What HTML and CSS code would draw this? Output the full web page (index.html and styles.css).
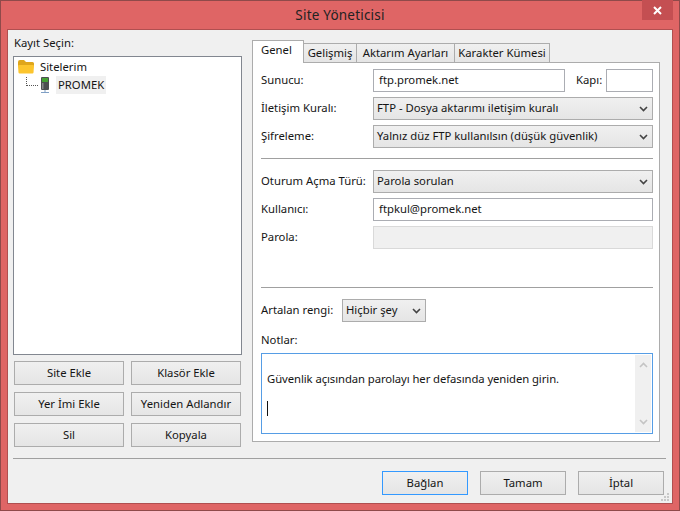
FILE: index.html
```html
<!DOCTYPE html>
<html lang="tr">
<head>
  <meta charset="UTF-8">
  <title>Site Yöneticisi</title>
  <link rel="stylesheet" href="styles.css">
</head>
<body>
  <div class="window">
    <div class="titlebar">
      <span class="title">Site Yöneticisi</span>
      <div class="close"><svg width="9" height="9" viewBox="0 0 9 9"><path d="M1 1L8 8M8 1L1 8" stroke="#fff" stroke-width="2"/></svg></div>
    </div>
    <div class="client">
      <div class="main">
        <div class="left">
          <div class="left-label">Kayıt Seçin:</div>
          <div class="tree">
            <div class="tree-row">
              <svg class="folder" width="16" height="14" viewBox="0 0 16 14">
                <path d="M0 2Q0 0 2 0H6L8 2H14.500Q16 2 16 3.500V6H0Z" fill="#dfa61c"/>
                <path d="M0 6Q0 5 1 5H15Q16 5 16 6L15.500 12.500Q15.400 13.500 14.500 13.500H1.500Q.6 13.500 .5 12.500Z" fill="#fcc52e"/>
              </svg>
              <span class="root-name">Sitelerim</span>
            </div>
            <div class="tree-row child">
              <span class="dots"></span>
              <svg class="server" width="12" height="17" viewBox="0 0 12 17">
                <rect x="2" y="0" width="8" height="13" rx="1" fill="#4c4f51"/>
                <rect x="3" y="1" width="6" height="4" fill="#45a135"/>
                <rect x="3" y="6" width="1.500" height="6" fill="#85888a"/>
                <path d="M6 13V15M2 15.500H10" stroke="#7f9fc4" stroke-width="1"/>
              </svg>
              <span class="selected">PROMEK</span>
            </div>
          </div>
          <div class="left-buttons">
            <div class="btn">Site Ekle</div>
            <div class="btn">Klasör Ekle</div>
            <div class="btn">Yer İmi Ekle</div>
            <div class="btn">Yeniden Adlandır</div>
            <div class="btn">Sil</div>
            <div class="btn">Kopyala</div>
          </div>
        </div>
        <div class="right">
          <div class="tabs">
            <div class="tab active">Genel</div>
            <div class="tab">Gelişmiş</div>
            <div class="tab">Aktarım Ayarları</div>
            <div class="tab">Karakter Kümesi</div>
          </div>
          <div class="panel">
            <div class="row">
              <label class="lbl">Sunucu:</label>
              <div class="input host">ftp.promek.net</div>
              <label class="port-lbl">Kapı:</label>
              <div class="input port"></div>
            </div>
            <div class="row">
              <label class="lbl">İletişim Kuralı:</label>
              <div class="select grow">FTP - Dosya aktarımı iletişim kuralı<svg class="chev" width="9" height="6" viewBox="0 0 9 6"><path d="M1 1L4.500 4.500L8 1" fill="none" stroke="#444" stroke-width="1.600"/></svg></div>
            </div>
            <div class="row">
              <label class="lbl">Şifreleme:</label>
              <div class="select grow">Yalnız düz FTP kullanılsın (düşük güvenlik)<svg class="chev" width="9" height="6" viewBox="0 0 9 6"><path d="M1 1L4.500 4.500L8 1" fill="none" stroke="#444" stroke-width="1.600"/></svg></div>
            </div>
            <div class="rule rule-a"></div>
            <div class="row">
              <label class="lbl">Oturum Açma Türü:</label>
              <div class="select grow">Parola sorulan<svg class="chev" width="9" height="6" viewBox="0 0 9 6"><path d="M1 1L4.500 4.500L8 1" fill="none" stroke="#444" stroke-width="1.600"/></svg></div>
            </div>
            <div class="row">
              <label class="lbl">Kullanıcı:</label>
              <div class="input grow">ftpkul@promek.net</div>
            </div>
            <div class="row">
              <label class="lbl">Parola:</label>
              <div class="input grow disabled"></div>
            </div>
            <div class="rule rule-b"></div>
            <div class="row color-row">
              <label class="color-lbl">Artalan rengi:</label>
              <div class="select color">Hiçbir şey<svg class="chev" width="9" height="6" viewBox="0 0 9 6"><path d="M1 1L4.500 4.500L8 1" fill="none" stroke="#444" stroke-width="1.600"/></svg></div>
            </div>
            <div class="notes-lbl">Notlar:</div>
            <div class="notes">
              <div class="notes-text">
                <p>Güvenlik açısından parolayı her defasında yeniden girin.</p>
                <span class="caret"></span>
              </div>
              <div class="scroll">
                <svg width="9" height="6" viewBox="0 0 9 6"><path d="M1 5L4.500 1.500L8 5" fill="none" stroke="#c4c4c4" stroke-width="1.600"/></svg>
                <svg width="9" height="6" viewBox="0 0 9 6"><path d="M1 1L4.500 4.500L8 1" fill="none" stroke="#c4c4c4" stroke-width="1.600"/></svg>
              </div>
            </div>
          </div>
        </div>
      </div>
      <div class="footer">
        <div class="btn wide default">Bağlan</div>
        <div class="btn wide">Tamam</div>
        <div class="btn wide">İptal</div>
      </div>
      <svg class="grip" width="8" height="8" viewBox="0 0 8 8"><path d="M6 0h2v2H6zM3 3h2v2H3zM6 3h2v2H6zM0 6h2v2H0zM3 6h2v2H3zM6 6h2v2H6z" fill="#c8c8c8"/></svg>
    </div>
  </div>
</body>
</html>
```

FILE: styles.css
```css
* { box-sizing: border-box; }
html, body { margin: 0; height: 100%; }
body { font-family: "Noto Sans", sans-serif; font-size: 11.3px; color: #151515; overflow: hidden; }

.window { width: 680px; height: 511px; background: #df6565; border: 1px solid #8f4a4a; display: flex; flex-direction: column; padding: 0 6px 6px; }
.titlebar { height: 28px; flex: none; position: relative; display: flex; align-items: center; justify-content: center; }
.title { font-size: 13.500px; color: #222; letter-spacing: 0.2px; padding-bottom: 1px; }
.close { position: absolute; right: 0; top: -1px; width: 31px; height: 20px; background: #c44f52; display: flex; align-items: center; justify-content: center; }

.client { flex: 1; background: #f0f0f0; border: 1px solid #b04f50; position: relative; display: flex; flex-direction: column; padding: 0 6px 0 5px; }
.main { display: flex; height: 428px; flex: none; }

.left { width: 229px; margin-right: 10px; flex: none; }
.left-label { height: 26px; padding: 5px 0 0 1px; line-height: 16px; }
.tree { height: 299px; background: #fff; border: 1px solid #828790; padding: 1px 0 0 4px; }
.tree-row { display: flex; align-items: center; height: 18px; }
.folder { margin-right: 6px; }
.root-name { margin-bottom: 2px; }
.child { padding-left: 8px; }
.dots { width: 12px; height: 9px; margin-top: -8px; border-left: 1px dotted #555; border-bottom: 1px dotted #555; margin-right: 1px; }
.server { margin-right: 5px; }
.selected { background: #f0f0f0; padding: 0 2px; height: 18px; line-height: 18px; }
.left-buttons { display: grid; grid-template-columns: 110px 110px; gap: 7px; padding: 6px 0 0 1px; }

.btn { height: 24px; border: 1px solid #acacac; background: linear-gradient(#f0f0f0, #e5e5e5); display: flex; align-items: center; justify-content: center; padding-bottom: 2px; }

.right { flex: 1; margin-right: 6px; }
.tabs { display: flex; height: 32px; align-items: flex-end; padding-top: 10px; position: relative; z-index: 1; }
.tab { height: 19px; border: 1px solid #acacac; border-bottom: 0; border-left: 0; background: linear-gradient(#f0f0f0, #e5e5e5); display: flex; align-items: center; width: 53px; justify-content: center; white-space: nowrap; padding-bottom: 2px; }
.tab:nth-child(3) { width: 98px; }
.tab:nth-child(4) { width: 95px; }
.tab.active { height: 23px; width: 52px; border-left: 1px solid #acacac; background: #fff; margin-bottom: -1px; justify-content: flex-start; padding: 0 0 5px 8px; }

.panel { height: 380px; background: #fff; border: 1px solid #acacac; padding: 6px 6px 0 8px; }
.row { display: flex; align-items: center; height: 23px; margin-bottom: 5px; }
.lbl { width: 112px; flex: none; padding-bottom: 2px; }
.port-lbl { width: 41px; padding: 0 0 2px 11px; flex: none; }
.grow { flex: 1; }
.input { height: 23px; background: #fff; border: 1px solid #abadb3; padding: 0 0 0 5px; line-height: 19px; }
.host { width: 192px; flex: none; }
.port { width: 47px; flex: none; }
.disabled { background: #f0f0f0; border-color: #d9d9d9; }
.select { height: 23px; border: 1px solid #acacac; background: linear-gradient(#f0f0f0, #e5e5e5); padding: 0 0 0 3px; line-height: 19px; position: relative; }
.chev { position: absolute; right: 4px; top: 8px; }
.rule { height: 1px; background: #a0a0a0; }
.rule-a { margin: 10px 0 11px; }
.rule-b { margin: 38px 0 11px; }
.color-row { margin-bottom: 0; }
.color-lbl { width: 81px; flex: none; padding-bottom: 2px; }
.color { width: 84px; }
.notes-lbl { height: 31px; padding-top: 10px; line-height: 16px; }
.notes { height: 81px; border: 1px solid #569de5; display: flex; }
.notes-text { flex: 1; padding: 17px 0 0 5px; }
.notes-text p { margin: 0; line-height: 16px; letter-spacing: -0.08px; }
.caret { display: block; width: 1px; height: 15px; background: #111; margin-top: 14px; }
.scroll { width: 16px; margin: 1px; background: #f0f0f0; display: flex; flex-direction: column; justify-content: space-between; align-items: center; padding: 7px 0; }

.footer { border-top: 1px solid #a0a0a0; padding: 12px 2px 0 0; display: flex; justify-content: flex-end; gap: 12px; }
.wide { width: 86px; }
.default { border-color: #3399ff; }
.grip { position: absolute; right: 3px; bottom: 2px; }
```
